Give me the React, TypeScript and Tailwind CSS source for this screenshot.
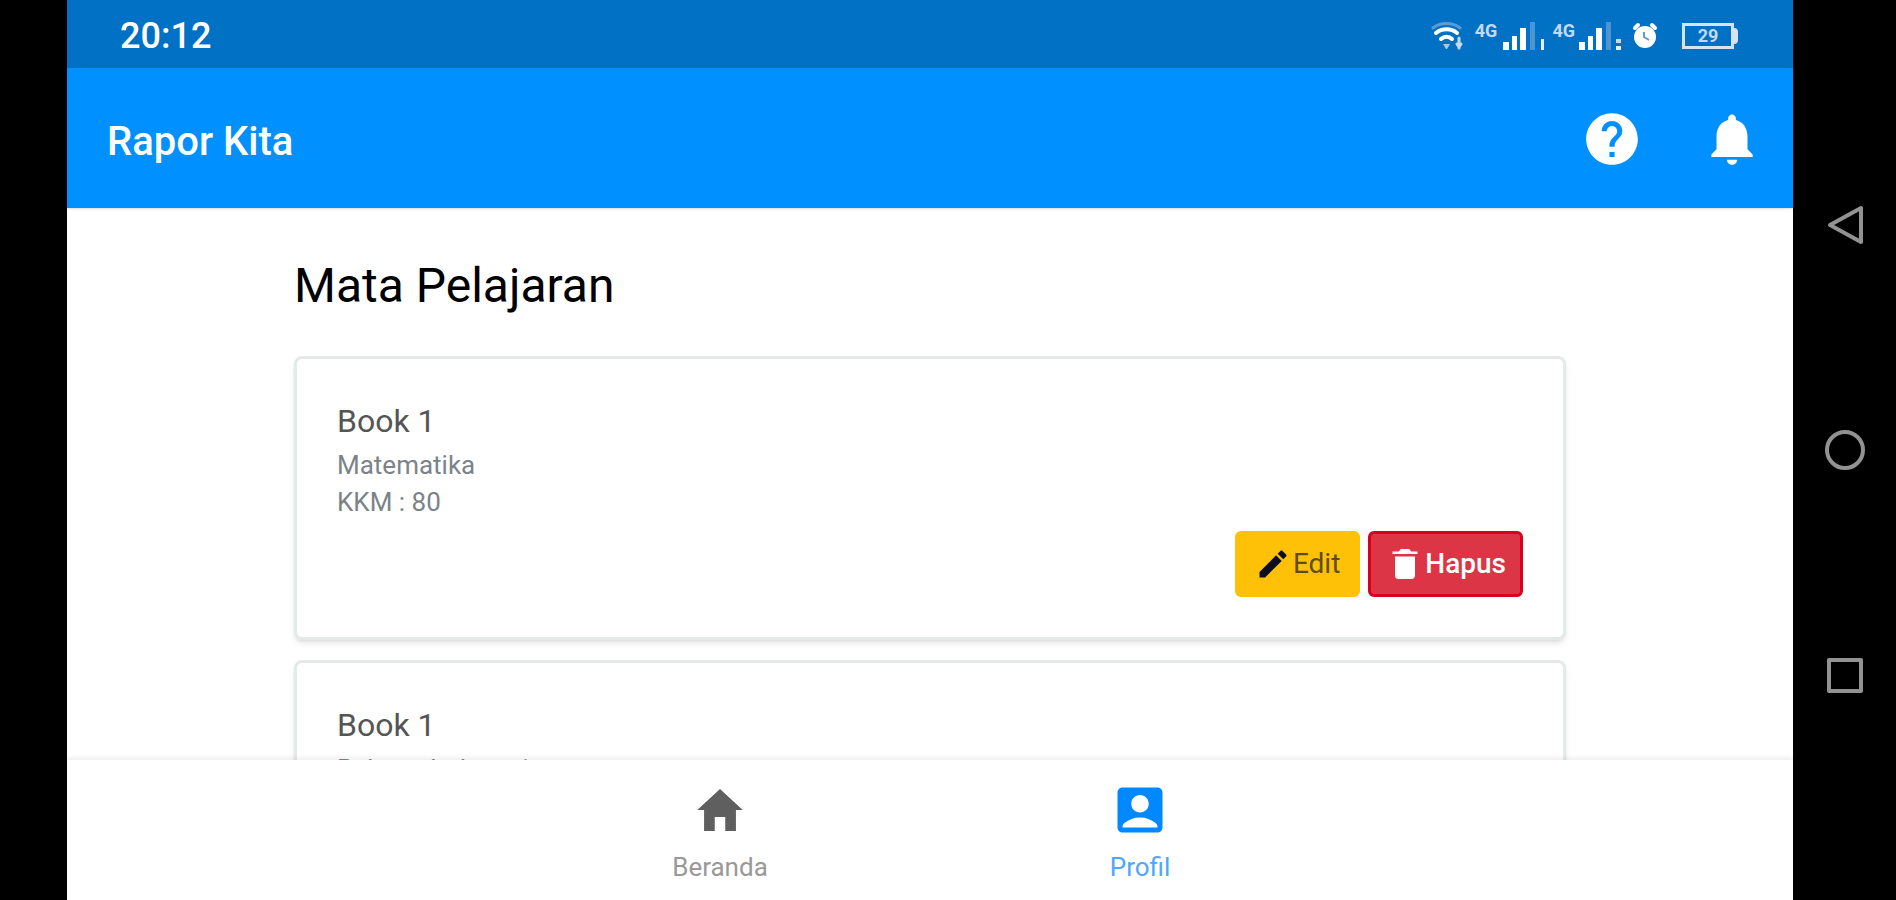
import { IoMdCreate, IoMdHome, IoMdTrash } from "react-icons/io";
import { MdAccountBox, MdHelp, MdNotifications } from "react-icons/md";

interface Subject {
  id: number;
  title: string;
  name: string;
  kkm: number;
}

const subjects: Subject[] = [
  { id: 1, title: "Book 1", name: "Matematika", kkm: 80 },
  { id: 2, title: "Book 1", name: "Bahasa Indonesia", kkm: 80 },
];

function WifiIcon() {
  return (
    <svg width="32" height="28" viewBox="0 0 32 28" fill="none" strokeLinecap="round" aria-hidden="true">
      <path d="M2 6C9 0 22 0 29 6" stroke="#5c9bd6" strokeWidth="3" />
      <path d="M5 11C11 6 20 6 26 11" stroke="#fff" strokeWidth="4" />
      <path d="M10 17c3-3 8-3 11 0" stroke="#fff" strokeWidth="4" />
      <path d="M12 22h7l-3 5h-1z" fill="#a9c8ea" />
      <path d="M28 16v10m-2-4 2 3 2-3" stroke="#c5d9f2" strokeWidth="3" />
    </svg>
  );
}

function SignalIcon({ sim }: { sim: 1 | 2 }) {
  return (
    <svg width="43" height="28" viewBox="0 0 43 28" aria-hidden="true">
      <rect x="0" y="20" width="6" height="8" fill="#fff" />
      <rect x="9" y="14" width="5" height="14" fill="#fff" />
      <rect x="17" y="6" width="6" height="22" fill="#fff" />
      <rect x="27" y="0" width="5" height="28" fill="#4d94d3" />
      {sim === 1 ? (
        <rect x="38" y="17" width="3" height="11" fill="#e5eefa" />
      ) : (
        <>
          <rect x="37" y="17" width="5" height="4" fill="#c5d9f2" />
          <rect x="37" y="24" width="5" height="4" fill="#e5eefa" />
        </>
      )}
    </svg>
  );
}

function AlarmIcon() {
  return (
    <svg width="26" height="28" viewBox="0 0 26 28" aria-hidden="true">
      <path d="M3 6 6 3M23 6l-3-3" stroke="#fff" strokeWidth="4" strokeLinecap="round" />
      <circle cx="13" cy="15" r="11" fill="#fff" />
      <path d="M12 10v5l5 3" fill="none" stroke="#5c9bd6" strokeWidth="2" />
    </svg>
  );
}

function StatusBar() {
  return (
    <div className="flex h-[68px] shrink-0 items-center justify-between bg-[#0071c5] pt-1 pr-[55px] pl-[53px] text-white">
      <span className="text-4xl font-medium">20:12</span>
      <div className="flex items-center">
        <WifiIcon />
        <span className="mr-1.5 ml-3 self-start text-lg leading-none font-bold text-[#c5d9f2]">4G</span>
        <SignalIcon sim={1} />
        <span className="mr-1 ml-1.5 self-start text-lg leading-none font-bold text-[#c5d9f2]">4G</span>
        <SignalIcon sim={2} />
        <span className="ml-2.5">
          <AlarmIcon />
        </span>
        <div className="ml-6 flex items-center">
          <span className="flex h-[26px] w-[52px] items-center justify-center border-3 border-[#d5e3f5] text-lg leading-none font-bold text-[#c5d9f2]">
            29
          </span>
          <span className="h-4 w-1 rounded-r-sm bg-[#d5e3f5]" />
        </div>
      </div>
    </div>
  );
}

function Header() {
  return (
    <header className="flex h-[140px] shrink-0 items-center justify-between bg-[#0090ff] pt-0.5 pr-[30px] pl-10 text-white shadow-sm">
      <h1 className="pt-1.5 text-[40px] font-medium">Rapor Kita</h1>
      <div className="flex items-center gap-[58px]">
        <button type="button" aria-label="Bantuan">
          <MdHelp size={62} />
        </button>
        <button type="button" aria-label="Notifikasi">
          <MdNotifications size={62} />
        </button>
      </div>
    </header>
  );
}

function SubjectCard({ subject }: { subject: Subject }) {
  return (
    <article className="rounded-lg border-3 border-[#e6e9e9] bg-white px-10 py-10 shadow-md">
      <h3 className="mb-1 text-[32px] leading-[44px] text-[#555]">{subject.title}</h3>
      <p className="text-[26px] leading-[37px] text-[#7b8389]">{subject.name}</p>
      <p className="text-[26px] leading-[37px] text-[#7b8389]">KKM : {subject.kkm}</p>
      <div className="mt-2.5 flex justify-end gap-2">
        <button
          type="button"
          className="flex h-[66px] items-center gap-0.5 rounded-md bg-[#ffc107] px-5 text-[28px] text-[#5c4d14]"
        >
          <IoMdCreate size={36} className="text-[#0d0d20]" />
          Edit
        </button>
        <button
          type="button"
          className="flex h-[66px] items-center rounded-md border-3 border-[#d9001f] bg-[#dc3545] px-3.5 text-[28px] font-medium text-white"
        >
          <IoMdTrash size={40} />
          Hapus
        </button>
      </div>
    </article>
  );
}

function BottomNav() {
  return (
    <nav className="relative flex h-[140px] shrink-0 justify-center bg-white shadow-[0_-3px_4px_rgba(0,0,0,0.06)]">
      <a href="#beranda" className="flex w-[420px] flex-col items-center pt-5 text-[#999]">
        <IoMdHome size={60} className="p-0.5 text-[#5f5f5f]" />
        <span className="mt-2 text-[26px]">Beranda</span>
      </a>
      <a href="#profil" aria-current="page" className="flex w-[420px] flex-col items-center pt-5 text-[#4fa6ff]">
        <MdAccountBox size={60} className="text-[#0088ff]" />
        <span className="mt-2 text-[26px]">Profil</span>
      </a>
    </nav>
  );
}

// Android navigation keys, on the right edge in landscape
function SystemKeys() {
  return (
    <div className="flex w-[103px] shrink-0 flex-col items-center justify-center text-[#929292]">
      <button type="button" aria-label="Kembali" className="h-1/4">
        <svg width="40" height="40" viewBox="0 0 40 40" fill="none" stroke="currentColor" strokeWidth="4" strokeLinejoin="round">
          <path d="M36 3v34L5 20z" />
        </svg>
      </button>
      <button type="button" aria-label="Layar utama" className="h-1/4">
        <svg width="40" height="40" viewBox="0 0 40 40" fill="none" stroke="currentColor" strokeWidth="4">
          <circle cx="20" cy="20" r="18" />
        </svg>
      </button>
      <button type="button" aria-label="Aplikasi terbaru" className="h-1/4">
        <svg width="40" height="40" viewBox="0 0 40 40" fill="none" stroke="currentColor" strokeWidth="4" strokeLinejoin="round">
          <rect x="4" y="5" width="32" height="31" />
        </svg>
      </button>
    </div>
  );
}

export default function App() {
  return (
    <div className="flex h-screen bg-black pl-[67px] font-['Roboto',sans-serif]">
      <div className="flex min-w-0 flex-1 flex-col bg-white">
        <StatusBar />
        <Header />
        <main className="min-h-0 flex-1 overflow-y-auto [scrollbar-width:none]">
          <div className="mx-auto max-w-[1272px] pt-12">
            <h2 className="text-5xl leading-[60px] text-black">Mata Pelajaran</h2>
            <div className="mt-10 flex flex-col gap-5">
              {subjects.map((s) => (
                <SubjectCard key={s.id} subject={s} />
              ))}
            </div>
          </div>
        </main>
        <BottomNav />
      </div>
      <SystemKeys />
    </div>
  );
}
